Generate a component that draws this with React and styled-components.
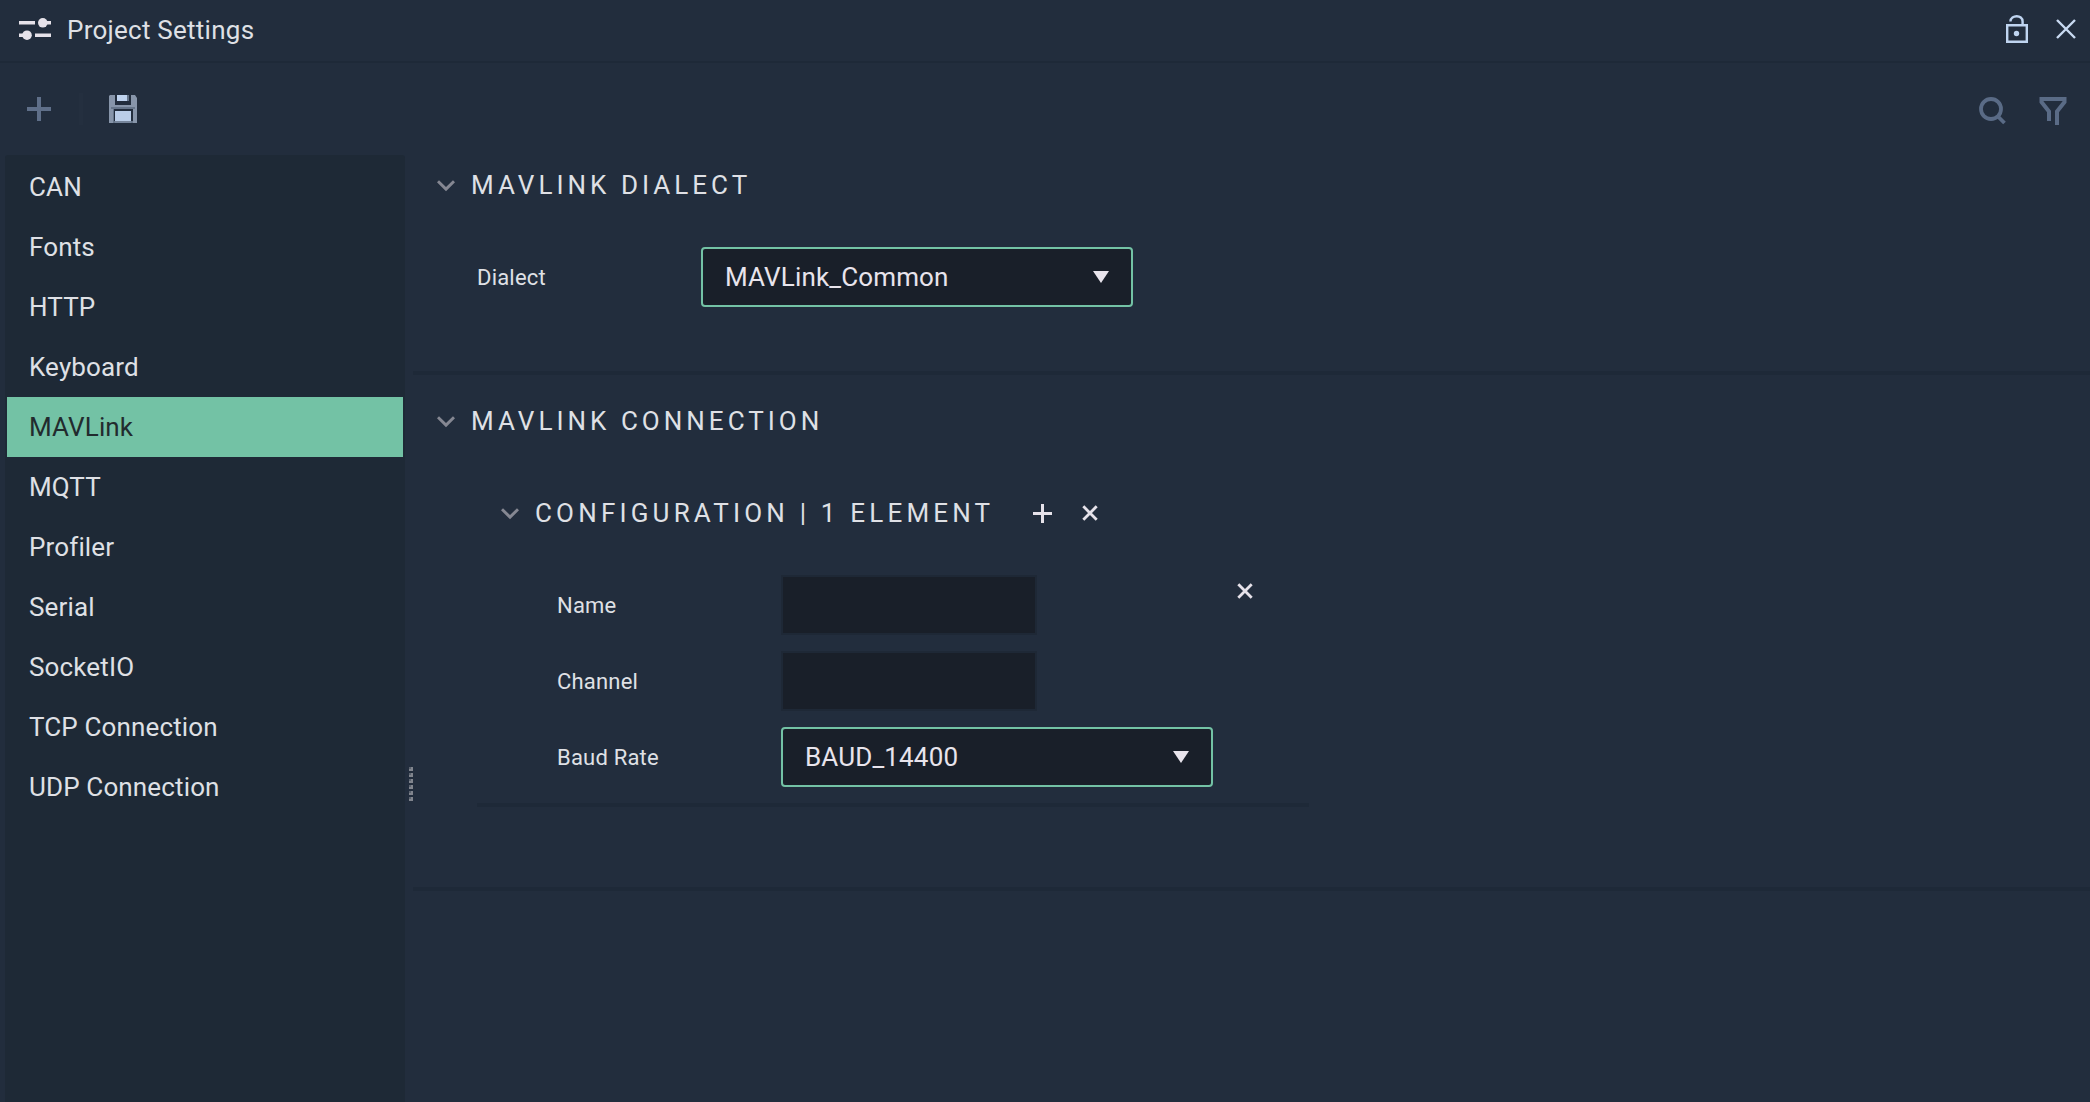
import React from "react";
import styled, { createGlobalStyle } from "styled-components";

const GlobalStyle = createGlobalStyle`
  * { box-sizing: border-box; }
  html, body, #root { height: 100%; }
  body {
    margin: 0;
    overflow: hidden;
    background: #222d3d;
    color: #dfe0e5;
    font-family: Roboto, "Liberation Sans", sans-serif;
    font-size: 26px;
  }
`;

const Window = styled.div`
  display: flex;
  flex-direction: column;
  height: 100vh;
`;

const TitleBar = styled.header`
  display: flex;
  align-items: center;
  flex: none;
  height: 63px;
  padding: 0 14px 3px 19px;
  border-bottom: 2px solid #1e2938;
  color: #e6e2ea;
`;

const Title = styled.h1`
  flex: 1;
  margin: 0 0 0 16px;
  padding-top: 2px;
  color: #dfe0e5;
  font-size: 26px;
  line-height: 58px;
  font-weight: 400;
  letter-spacing: 0.25px;
`;

const IconButton = styled.button`
  display: flex;
  flex: none;
  padding: 0;
  border: 0;
  background: none;
  color: ${(p) => p.$color || "#e6e2ea"};
  margin: ${(p) => p.$margin || 0};
`;

const Toolbar = styled.div`
  display: flex;
  flex: none;
  align-items: flex-start;
  height: 92px;
  padding: 30px 23px 0 27px;
`;

const Separator = styled.div`
  width: 4px;
  height: 32px;
  margin: 0 26px 0 28px;
  background: #242f3f;
`;

const Spacer = styled.div`
  flex: 1;
`;

const Body = styled.div`
  display: flex;
  flex: 1;
  min-height: 0;
  padding-left: 5px;
`;

const Sidebar = styled.nav`
  flex: none;
  width: 400px;
  padding: 2px;
  border-radius: 3px 3px 0 0;
  background: #1e2936;
`;

const SidebarItem = styled.div`
  height: 60px;
  padding-left: 22px;
  line-height: 60px;
  letter-spacing: 0.14px;
  color: ${(p) => (p.$active ? "#222b2e" : "inherit")};
  background: ${(p) => (p.$active ? "#73c2a5" : "transparent")};
`;

const Splitter = styled.div`
  display: flex;
  flex-direction: column;
  gap: 2px;
  flex: none;
  width: 8px;
  padding: 612px 0 0 4px;
`;

const Grip = styled.span`
  width: 4px;
  height: 4px;
  border: solid #80848d;
  border-width: 0 2px 2px 0;
  background: #5a626e;
`;

const Content = styled.main`
  flex: 1;
  min-width: 0;
`;

const Section = styled.section`
  height: ${(p) => p.$height}px;
  padding: ${(p) => p.$top || 0}px 0 0 24px;
  border-bottom: 4px solid #1e2938;
`;

const Heading = styled.h2`
  display: flex;
  align-items: center;
  height: 60px;
  margin: 0;
  font-size: 26px;
  line-height: 60px;
  font-weight: 400;
  letter-spacing: ${(p) => p.$spacing || 4.02}px;
  white-space: nowrap;
`;

const HeadingText = styled.span`
  margin-left: 16px;
`;

const Fields = styled.div`
  display: flex;
  flex-direction: column;
  gap: 16px;
  padding: ${(p) => p.$padding};
`;

const Field = styled.div`
  display: flex;
  align-items: center;
  height: 60px;
`;

const Label = styled.label`
  width: 224px;
  font-size: 22px;
  letter-spacing: 0.2px;
`;

const Select = styled.div`
  display: flex;
  align-items: center;
  justify-content: space-between;
  width: 432px;
  height: 60px;
  padding: 0 22px;
  border: 2px solid #73c2a5;
  border-radius: 4px;
  background: #191f29;
  color: #e8e4ec;
  line-height: 56px;
  letter-spacing: 0.15px;
`;

const Input = styled.input`
  width: 256px;
  height: 60px;
  border: 2px solid #1e2836;
  background: #191f29;
  color: inherit;
  font: inherit;
  outline: none;
`;

const Group = styled.div`
  padding: 32px 0 0 64px;
`;

const Element = styled.div`
  display: flex;
  width: 832px;
  height: 232px;
  margin: 32px 0 0 -24px;
  padding-left: 80px;
  border-bottom: 4px solid #1e2938;
`;

const SlidersIcon = () => (
  <svg width="32" height="22" viewBox="0 0 32 22" fill="currentColor">
    <path d="M0 3h16v3.500H0zM16 15.500h16v3.500H16zM28 3h4v3.500h-4zM0 15.500h4v3.500H0z" />
    <circle cx="23.800" cy="4.800" r="4.800" />
    <circle cx="8" cy="17.200" r="4.800" />
  </svg>
);

const LockIcon = () => (
  <svg width="22" height="30" viewBox="0 0 22 30" fill="none" stroke="currentColor" strokeWidth="2.400">
    <path d="M1.200 11.200h19.600v16.600H1.200z" />
    <path d="M4.400 7.500C5 0.500 16.600 0.500 16.600 7.500V11" />
    <circle cx="10.500" cy="19.500" r="2.700" fill="currentColor" stroke="none" />
  </svg>
);

const CloseIcon = () => (
  <svg width="20" height="20" viewBox="0 0 20 20" fill="none" stroke="currentColor" strokeWidth="2.400">
    <path d="M1 1l18 18M19 1L1 19" />
  </svg>
);

const PlusIcon = ({ size = 24, weight = 4 }) => (
  <svg width={size} height={size} viewBox={`0 0 ${size} ${size}`} fill="none" stroke="currentColor" strokeWidth={weight}>
    <path d={`M0 ${size / 2}H${size}M${size / 2} 0V${size}`} />
  </svg>
);

const CrossIcon = () => (
  <svg width="16" height="16" viewBox="0 0 16 16" fill="none" stroke="currentColor" strokeWidth="2.800">
    <path d="M1.300 1.300l13.400 13.400M14.700 1.300L1.300 14.700" />
  </svg>
);

const SaveIcon = () => (
  <svg width="28" height="28" viewBox="0 0 28 28">
    <path d="M1 0H6V10H22V0H26L28 3V28H0V1z" fill="#8795aa" />
    <path d="M2 12H26V14H24V28H4V14H2z" fill="#66758a" />
    <path d="M6 0H22V8H6zM5 14H24V26H5z" fill="#222d3d" />
    <path d="M8 0H18V6H8z" fill="#bfd3ef" />
    <path d="M18 0H20V6H18z" fill="#66758a" />
    <path d="M6 16H22V26H6z" fill="#bacde8" />
    <path d="M6 26H22V28H6z" fill="#76859b" />
  </svg>
);

const SearchIcon = () => (
  <svg width="28" height="28" viewBox="0 0 28 28" fill="none" stroke="currentColor" strokeWidth="3.800">
    <circle cx="12" cy="12" r="10" />
    <path d="M18.500 19L25.500 26" />
  </svg>
);

const FilterIcon = () => (
  <svg width="28" height="28" viewBox="0 0 28 28" fill="none" stroke="currentColor" strokeWidth="4">
    <path d="M10 24V14.500L2.500 5V2H25.500V5L18 14.500V28" />
  </svg>
);

const ChevronSvg = styled.svg`
  flex: none;
  margin-top: 2px;
`;

const Chevron = () => (
  <ChevronSvg width="18" height="12" viewBox="0 0 18 12" fill="none" stroke="#858792" strokeWidth="2.900">
    <path d="M1 1.300L9 9.100L17 1.300" />
  </ChevronSvg>
);

const Arrow = () => (
  <svg width="16" height="12" viewBox="0 0 16 12" fill="currentColor">
    <path d="M0 0H16L8 12z" />
  </svg>
);

const CATEGORIES = [
  "CAN",
  "Fonts",
  "HTTP",
  "Keyboard",
  "MAVLink",
  "MQTT",
  "Profiler",
  "Serial",
  "SocketIO",
  "TCP Connection",
  "UDP Connection",
];

export default function App() {
  return (
    <>
      <GlobalStyle />
      <Window>
        <TitleBar>
          <SlidersIcon />
          <Title>Project Settings</Title>
          <IconButton $color="#bfd4f0" $margin="0 28px 0 0"><LockIcon /></IconButton>
          <IconButton $color="#c9daf2"><CloseIcon /></IconButton>
        </TitleBar>
        <Toolbar>
          <IconButton $color="#5f6f89" $margin="4px 0 0"><PlusIcon /></IconButton>
          <Separator />
          <IconButton $margin="2px 0 0"><SaveIcon /></IconButton>
          <Spacer />
          <IconButton $color="#5a6b86" $margin="4px 32px 0 0"><SearchIcon /></IconButton>
          <IconButton $color="#5a6b86" $margin="4px 0 0"><FilterIcon /></IconButton>
        </Toolbar>
        <Body>
          <Sidebar>
            {CATEGORIES.map((name) => (
              <SidebarItem key={name} $active={name === "MAVLink"}>{name}</SidebarItem>
            ))}
          </Sidebar>
          <Splitter>
            {[0, 1, 2, 3, 4, 5].map((i) => <Grip key={i} />)}
          </Splitter>
          <Content>
            <Section $height={220}>
              <Heading><Chevron /><HeadingText>MAVLINK DIALECT</HeadingText></Heading>
              <Fields $padding="32px 0 0 40px">
                <Field>
                  <Label>Dialect</Label>
                  <Select>MAVLink_Common<Arrow /></Select>
                </Field>
              </Fields>
            </Section>
            <Section $height={516} $top={16}>
              <Heading><Chevron /><HeadingText>MAVLINK CONNECTION</HeadingText></Heading>
              <Group>
                <Heading $spacing={4.18}>
                  <Chevron />
                  <HeadingText>CONFIGURATION | 1 ELEMENT</HeadingText>
                  <IconButton $margin="0 30px 0 39px"><PlusIcon size={19} weight={3} /></IconButton>
                  <IconButton><CrossIcon /></IconButton>
                </Heading>
                <Element>
                  <Fields $padding="0">
                    <Field><Label>Name</Label><Input /></Field>
                    <Field><Label>Channel</Label><Input /></Field>
                    <Field><Label>Baud Rate</Label><Select>BAUD_14400<Arrow /></Select></Field>
                  </Fields>
                  <IconButton $margin="8px 0 0 24px"><CrossIcon /></IconButton>
                </Element>
              </Group>
            </Section>
          </Content>
        </Body>
      </Window>
    </>
  );
}
